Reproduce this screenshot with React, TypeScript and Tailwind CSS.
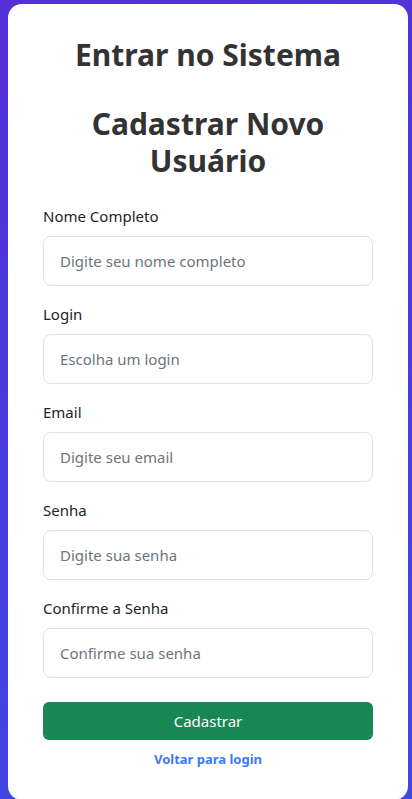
import { useState } from 'react'

const campos = [
  { id: 'nome', label: 'Nome Completo', placeholder: 'Digite seu nome completo', type: 'text' },
  { id: 'login', label: 'Login', placeholder: 'Escolha um login', type: 'text' },
  { id: 'email', label: 'Email', placeholder: 'Digite seu email', type: 'email' },
  { id: 'senha', label: 'Senha', placeholder: 'Digite sua senha', type: 'password' },
  { id: 'confirma', label: 'Confirme a Senha', placeholder: 'Confirme sua senha', type: 'password' },
]

export default function App() {
  const [valores, setValores] = useState<Record<string, string>>({})

  return (
    <div
      className="min-h-screen w-full bg-[linear-gradient(160deg,#5430d6,#3d4ae0)] pt-[4px] pl-[8px]"
      style={{ fontFamily: '"Noto Sans", "Open Sans", sans-serif' }}
    >
      <div className="w-[400px] bg-white rounded-[14px] px-[35px] pt-[32px] pb-[30px]">
        <h2 className="text-center text-[30px] font-bold leading-[38px] text-[#333]">Entrar no Sistema</h2>
        <h2 className="mt-[31px] text-center text-[30px] font-bold leading-[37px] text-[#333]">
          Cadastrar Novo Usuário
        </h2>

        <form className="mt-[25px]" onSubmit={e => e.preventDefault()}>
          {campos.map(c => (
            <div key={c.id} className="mb-4">
              <label htmlFor={c.id} className="block mb-2 text-[15px] leading-6 text-[#212529]">
                {c.label}
              </label>
              <input
                id={c.id}
                type={c.type}
                value={valores[c.id] ?? ''}
                onChange={e => setValores(v => ({ ...v, [c.id]: e.target.value }))}
                placeholder={c.placeholder}
                className="block w-full h-[50px] px-4 text-[15px] text-[#212529] border border-[#dee2e6] rounded-[8px] outline-none placeholder:text-[#6c757d]"
              />
            </div>
          ))}

          <button
            type="submit"
            className="mt-2 w-full h-[38px] rounded-[6px] bg-[#198754] text-white text-[15px]"
          >
            Cadastrar
          </button>
        </form>

        <p className="mt-[9px] text-center text-[13px] leading-[21px] font-bold">
          <a href="#" className="text-[#3a78fd]">Voltar para login</a>
        </p>
      </div>
    </div>
  )
}
